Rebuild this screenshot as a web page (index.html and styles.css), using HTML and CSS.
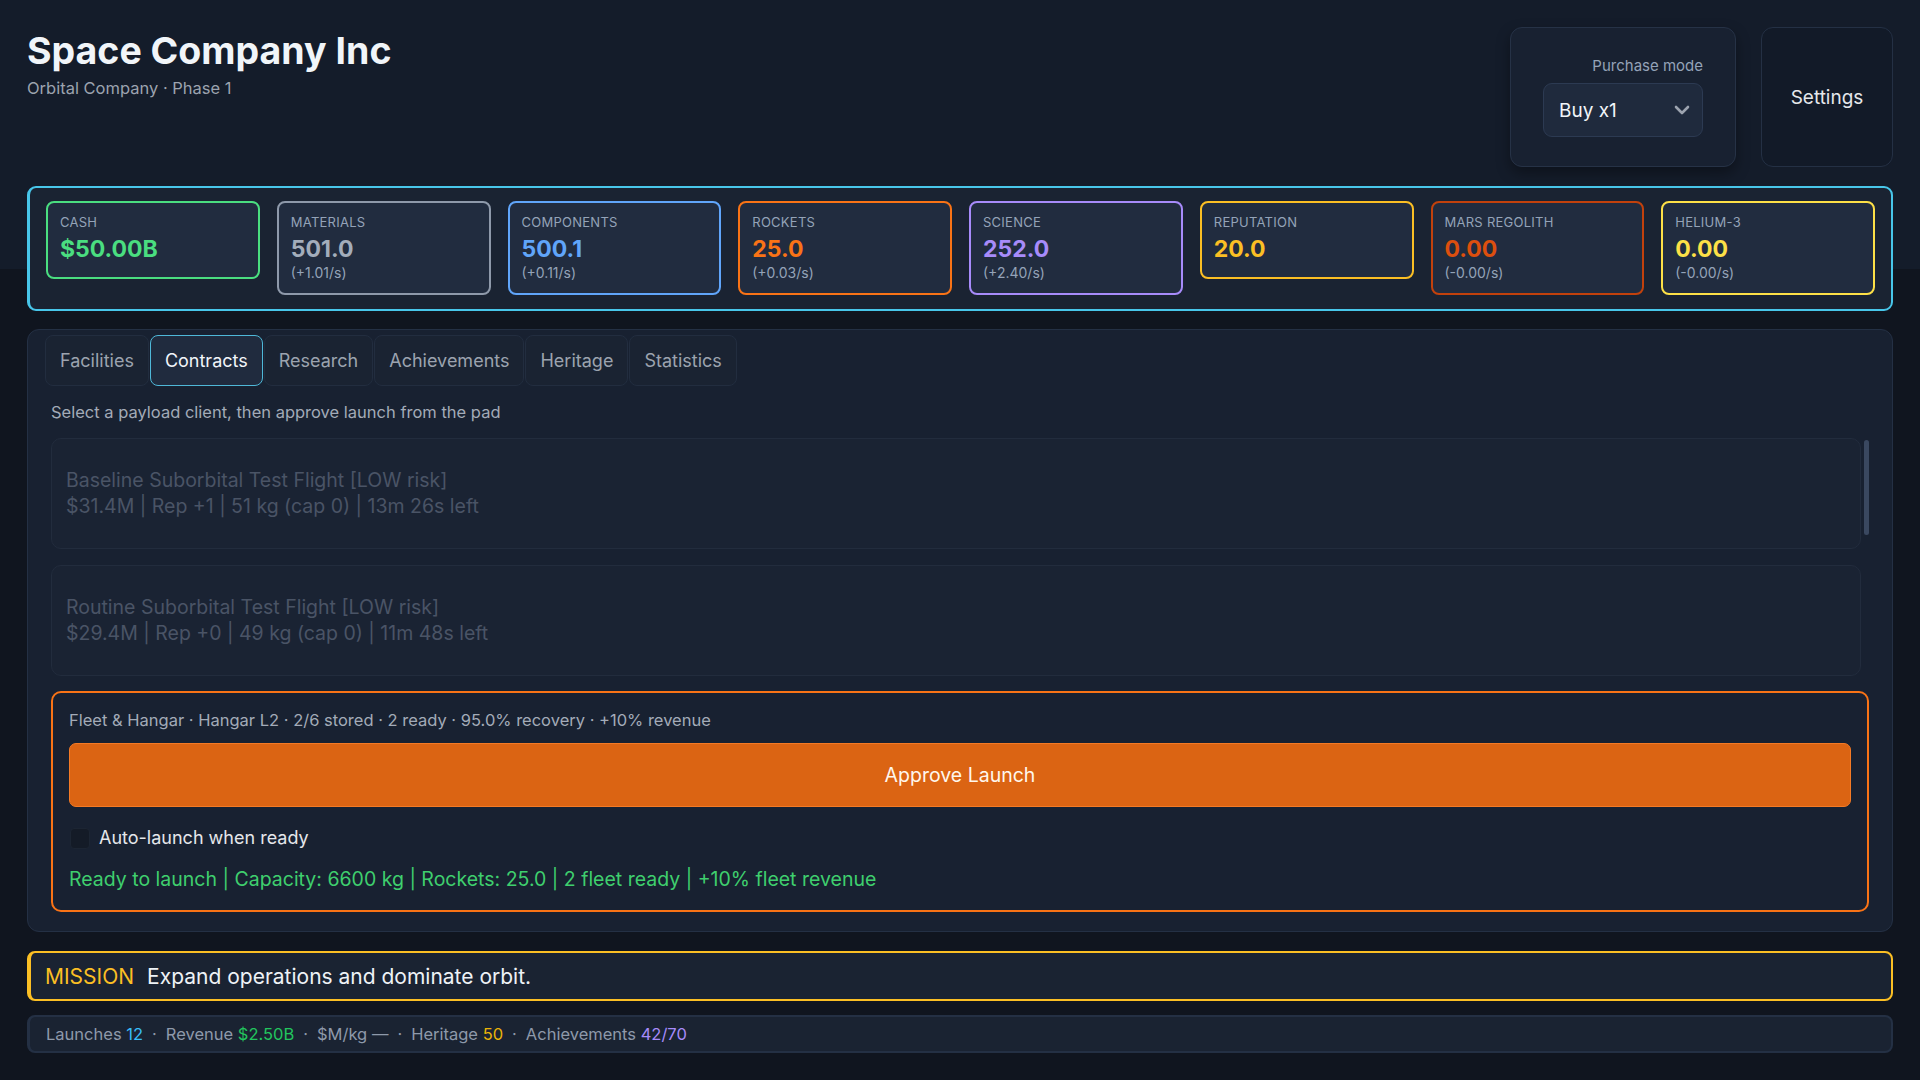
FILE: index.html
```html
<!DOCTYPE html>
<html lang="en">
<head>
  <meta charset="UTF-8" />
  <meta name="viewport" content="width=device-width, initial-scale=1.0" />
  <title>Space Company Inc</title>
  <link rel="stylesheet" href="styles.css">
</head>
<body>
  <header class="top">
    <div class="brand">
      <h1>Space Company Inc</h1>
      <div class="sub">Orbital Company · Phase 1</div>
    </div>
    <div class="controls">
      <div class="purchase">
        <label for="buyMode">Purchase mode</label>
        <div class="select-wrap">
          <select id="buyMode">
            <option>Buy x1</option>
          </select>
          <svg class="chev" width="16" height="10" viewBox="0 0 16 10"><path d="M2 2l6 6 6-6" fill="none" stroke="#9ca3af" stroke-width="2.6" stroke-linecap="round" stroke-linejoin="round"/></svg>
        </div>
      </div>
      <button class="settings" type="button">Settings</button>
    </div>
  </header>

  <!-- Resources -->
  <section class="resources">
    <div class="res res-cash">
      <div class="res-label">Cash</div>
      <div class="res-value">$50.00B</div>
    </div>
    <div class="res res-materials">
      <div class="res-label">Materials</div>
      <div class="res-value">501.0</div>
      <div class="res-rate">(+1.01/s)</div>
    </div>
    <div class="res res-components">
      <div class="res-label">Components</div>
      <div class="res-value">500.1</div>
      <div class="res-rate">(+0.11/s)</div>
    </div>
    <div class="res res-rockets">
      <div class="res-label">Rockets</div>
      <div class="res-value">25.0</div>
      <div class="res-rate">(+0.03/s)</div>
    </div>
    <div class="res res-science">
      <div class="res-label">Science</div>
      <div class="res-value">252.0</div>
      <div class="res-rate">(+2.40/s)</div>
    </div>
    <div class="res res-reputation">
      <div class="res-label">Reputation</div>
      <div class="res-value">20.0</div>
    </div>
    <div class="res res-regolith">
      <div class="res-label">Mars Regolith</div>
      <div class="res-value">0.00</div>
      <div class="res-rate">(-0.00/s)</div>
    </div>
    <div class="res res-helium">
      <div class="res-label">Helium-3</div>
      <div class="res-value">0.00</div>
      <div class="res-rate">(-0.00/s)</div>
    </div>
  </section>

  <!-- Main tabs -->
  <section class="panel">
    <nav class="tabs">
      <button class="tab">Facilities</button>
      <button class="tab active">Contracts</button>
      <button class="tab">Research</button>
      <button class="tab">Achievements</button>
      <button class="tab">Heritage</button>
      <button class="tab">Statistics</button>
    </nav>

    <div class="tab-body">
      <p class="hint">Select a payload client, then approve launch from the pad</p>

      <div class="contracts">
        <div class="contract">
          <div>Baseline Suborbital Test Flight [LOW risk]</div>
          <div>$31.4M | Rep +1 | 51 kg (cap 0) | 13m 26s left</div>
        </div>
        <div class="contract">
          <div>Routine Suborbital Test Flight [LOW risk]</div>
          <div>$29.4M | Rep +0 | 49 kg (cap 0) | 11m 48s left</div>
        </div>
        <span class="scroll-thumb"></span>
      </div>

      <div class="launch">
        <div class="fleet">Fleet &amp; Hangar · Hangar L2 · 2/6 stored · 2 ready · 95.0% recovery · +10% revenue</div>
        <button class="approve" type="button">Approve Launch</button>
        <label class="auto">
          <input type="checkbox" />
          <span>Auto-launch when ready</span>
        </label>
        <div class="ready">Ready to launch | Capacity: 6600 kg | Rockets: 25.0 | 2 fleet ready | +10% fleet revenue</div>
      </div>
    </div>
  </section>

  <div class="mission">
    <span class="mission-tag">MISSION</span>
    <span>Expand operations and dominate orbit.</span>
  </div>

  <footer class="summary">
    <span>Launches <b class="c-cyan">12</b></span>
    <span class="dot">·</span>
    <span>Revenue <b class="c-green">$2.50B</b></span>
    <span class="dot">·</span>
    <span>$M/kg —</span>
    <span class="dot">·</span>
    <span>Heritage <b class="c-yellow">50</b></span>
    <span class="dot">·</span>
    <span>Achievements <b class="c-purple">42/70</b></span>
  </footer>
</body>
</html>
```

FILE: styles.css
```css
* {
  box-sizing: border-box;
}

body {
  margin: 0;
  padding: 27px 27px 0;
  font-family: Inter, "Liberation Sans", sans-serif;
  color: #e5e7eb;
  background: linear-gradient(to bottom, #141c2a 0, #141c2a 269px, #10151f 269px);
  min-height: 100vh;
}

button,
select {
  font-family: inherit;
}

/* Header */
.top {
  display: flex;
  justify-content: space-between;
  align-items: flex-start;
}

.brand h1 {
  margin: 0;
  font-size: 37.5px;
  line-height: 47px;
  font-weight: 700;
  color: #f1f5f9;
}

.brand .sub {
  margin-top: 4px;
  font-size: 16.5px;
  line-height: 20px;
  color: #9ca3af;
}

.controls {
  display: flex;
  gap: 25px;
}

.purchase {
  width: 226px;
  height: 140px;
  padding: 29px 32px 0;
  background-color: #182131;
  border: 1px solid #263246;
  border-radius: 12px;
  box-shadow: 0 6px 14px rgba(0,0,0,0.35);
  display: flex;
  flex-direction: column;
  align-items: flex-end;
}

.purchase label {
  font-size: 15px;
  line-height: 18px;
  color: #94a3b8;
}

.select-wrap {
  position: relative;
  width: 100%;
  margin-top: 8px;
}

.select-wrap select {
  appearance: none;
  -webkit-appearance: none;
  width: 100%;
  height: 54px;
  padding: 0 15px;
  background-color: #1f2a3d;
  border: 1px solid #2c3a52;
  border-radius: 9px;
  color: #f1f5f9;
  font-size: 19px;
}

.chev {
  position: absolute;
  right: 13px;
  top: 22px;
  pointer-events: none;
}

.settings {
  width: 132px;
  height: 140px;
  background-color: #121a28;
  border: 1px solid #243044;
  border-radius: 12px;
  color: #e5e7eb;
  font-size: 19px;
  cursor: pointer;
}

/* Resources */
.resources {
  margin-top: 19px;
  display: grid;
  grid-template-columns: repeat(8, 1fr);
  gap: 17px;
  align-items: start;
  padding: 13px 16px 14px;
  background-color: #1a2332;
  border: 2px solid #48c6ea;
  border-left-width: 3px;
  border-radius: 9px;
}

.res {
  padding: 10px 12px 12px;
  background-color: #212c3f;
  border: 2px solid #94a3b8;
  border-radius: 8px;
}

.res-label {
  font-size: 13px;
  line-height: 18px;
  letter-spacing: 0.02em;
  text-transform: uppercase;
  color: #94a3b8;
}

.res-value {
  margin-top: 2px;
  font-size: 23px;
  line-height: 32px;
  font-weight: 700;
}

.res-rate {
  font-size: 14px;
  line-height: 16px;
  color: #94a3b8;
}

.res-cash { border-color: #4ade80; }
.res-cash .res-value { color: #4ade80; }
.res-materials { border-color: #8e99aa; }
.res-materials .res-value { color: #a3adbb; }
.res-components { border-color: #60a5fa; }
.res-components .res-value { color: #60a5fa; }
.res-rockets { border-color: #f97316; }
.res-rockets .res-value { color: #f97316; }
.res-science { border-color: #a78bfa; }
.res-science .res-value { color: #a78bfa; }
.res-reputation { border-color: #fbbf24; }
.res-reputation .res-value { color: #fbbf24; }
.res-regolith { border-color: #c2410c; }
.res-regolith .res-value { color: #dd4f0e; }
.res-helium { border-color: #fde047; }
.res-helium .res-value { color: #fde047; }

/* Tab panel */
.panel {
  margin-top: 18px;
  padding: 5px 17px 19px;
  background-color: #182131;
  border: 1px solid #243044;
  border-radius: 12px;
}

.tabs {
  display: flex;
  gap: 1px;
}

.tab {
  height: 51px;
  padding: 0 14px;
  background-color: #1a2332;
  border: 1px solid #222d3f;
  border-radius: 8px;
  color: #9ca3af;
  font-size: 18px;
  cursor: pointer;
}

.tab.active {
  background-color: #202b3e;
  border-color: #4fb8d8;
  color: #f1f5f9;
}

.tab-body {
  padding: 0 6px;
}

.hint {
  margin: 14px 0 14px;
  font-size: 16.5px;
  line-height: 24px;
  color: #a3abb8;
}

/* contract list, scrolled to top */
.contracts {
  position: relative;
  height: 238px;
  overflow: hidden;
  padding-right: 8px;
  display: flex;
  flex-direction: column;
  gap: 16px;
}

.scroll-thumb {
  position: absolute;
  top: 2px;
  right: 0;
  width: 5px;
  height: 95px;
  background-color: #3a4860;
  border-radius: 3px;
}

.contract {
  flex: 0 0 111px;
  padding: 28px 14px;
  background-color: #1a2333;
  border: 1px solid #222c3d;
  border-radius: 10px;
  font-size: 19.5px;
  line-height: 26px;
  color: #4a5466;
}

/* Launch pad */
.launch {
  margin-top: 15px;
  padding: 17px 16px 18px;
  border: 2px solid #f97316;
  border-radius: 10px;
}

.fleet {
  font-size: 16.5px;
  line-height: 20px;
  color: #a3abb8;
}

.approve {
  display: block;
  width: 100%;
  height: 64px;
  margin-top: 13px;
  background-color: #db6413;
  border: 1px solid #f47a25;
  border-radius: 7px;
  color: #fff7ed;
  font-size: 19.5px;
  cursor: pointer;
}

.auto {
  display: flex;
  align-items: center;
  gap: 9px;
  margin-top: 18px;
  font-size: 18px;
  line-height: 26px;
  color: #e5e7eb;
}

.auto input {
  appearance: none;
  -webkit-appearance: none;
  width: 20px;
  height: 21px;
  margin: 0 0 0 1px;
  background-color: #141b27;
  border: 1px solid #1c2533;
  border-radius: 4px;
}

.ready {
  margin-top: 15px;
  font-size: 19.5px;
  line-height: 26px;
  color: #3fcf6e;
}

/* Mission + summary */
.mission {
  margin-top: 19px;
  height: 50px;
  display: flex;
  align-items: center;
  gap: 13px;
  padding: 0 14px;
  background-color: #1a2332;
  border: 2px solid #fbbf24;
  border-left-width: 4px;
  border-radius: 8px;
  font-size: 21px;
  color: #eef2f6;
}

.mission-tag {
  color: #fbbf24;
}

.summary {
  margin-top: 14px;
  height: 38px;
  display: flex;
  align-items: center;
  padding: 0 16px;
  background-color: #1a2332;
  border: 2px solid #243044;
  border-left-width: 3px;
  border-radius: 8px;
  font-size: 16.5px;
  color: #8e99aa;
}

.summary b {
  font-weight: 400;
}

.summary .dot {
  margin: 0 9px;
}

.c-cyan { color: #38bdf8; }
.c-green { color: #22c55e; }
.c-yellow { color: #eab308; }
.c-purple { color: #a78bfa; }
```
